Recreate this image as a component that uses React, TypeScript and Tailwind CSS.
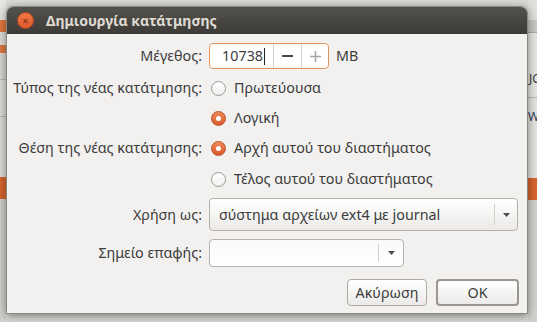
import React from 'react';

function Radio({ checked, label }: { checked: boolean; label: string }) {
  return (
    <div className="flex items-center gap-[8px] pl-[2px]">
      {checked ? (
        <span className="flex h-[15px] w-[15px] items-center justify-center rounded-full border border-[#b9532a] bg-gradient-to-b from-[#f08a5a] to-[#d9582a]">
          <span className="h-[5px] w-[5px] rounded-full bg-white" />
        </span>
      ) : (
        <span className="h-[15px] w-[15px] rounded-full border border-[#9d9a95] bg-gradient-to-b from-white to-[#f1f0ef]" />
      )}
      <span>{label}</span>
    </div>
  );
}

function Arrow() {
  return (
    <svg width="9" height="6" viewBox="0 0 9 6">
      <path d="M1 1h7L4.5 5z" fill="#4c4c4c" />
    </svg>
  );
}

export default function App() {
  return (
    <div className="relative h-[322px] w-[537px] overflow-hidden bg-[#dcdad6] font-['Noto_Sans',sans-serif] text-[14.3px] text-[#3c3c3c]">
      {/* window behind the dialog */}
      <div className="flex h-full justify-between">
        <div className="flex w-[6px] flex-col">
          <div className="h-[20px] bg-[#e6e5e2]" />
          <div className="h-[12px] bg-[#e4783f]" />
          <div className="h-[13px] bg-[#dedcd8]" />
          <div className="h-[8px] bg-[#dc7a45]" />
          <div className="h-[27px] bg-[#d8d6d2] border-b border-[#b8b6b2]" />
          <div className="h-[37px] bg-[#dfddd9] border-b border-[#b8b6b2]" />
          <div className="h-[60px] bg-[#dedcd8]" />
          <div className="h-[22px] bg-[#d9652f]" />
          <div className="flex-1 bg-[#d3d1cd]" />
        </div>
        <div className="flex w-[9px] flex-col overflow-hidden text-[12px] leading-none">
          <div className="h-[20px] bg-[#e0dfdc]" />
          <div className="h-[13px] border-b border-[#aaa8a4] bg-[#c9c7c3]" />
          <div className="flex h-[65px] items-end border-b border-[#b8b6b2] bg-[#e6e5e2] pb-[12px] pl-[1px]">JC</div>
          <div className="flex h-[80px] items-start bg-[#e4e3e0] pt-[13px] text-[#2f3a5a]">W</div>
          <div className="h-[22px] bg-[#d9652f]" />
          <div className="flex-1 bg-[#d3d1cd]" />
        </div>
      </div>

      {/* dialog */}
      <div className="absolute left-[6px] top-[6px] flex h-[308px] w-[522px] flex-col overflow-hidden rounded-t-[7px] border border-[#8a8884] bg-[#f2f1f0] shadow-[0_2px_10px_rgba(0,0,0,0.45)]">
        <div className="flex h-[27px] shrink-0 items-center bg-gradient-to-b from-[#53524d] to-[#3c3b37] pl-[10px]">
          <span className="flex h-[17px] w-[17px] items-center justify-center rounded-full border border-[#b4461f] bg-gradient-to-b from-[#f07746] to-[#df5a2a] text-[11px] leading-none text-[#7a2c10]">
            ×
          </span>
          <span className="ml-[12px] text-[14px] font-bold text-[#dfdbd2]">Δημιουργία κατάτμησης</span>
        </div>

        <div className="grid grid-cols-[195px_1fr] gap-x-[7px] pr-[9px] pt-[9px]">
          <div className="flex h-[26px] items-center justify-end">Μέγεθος:</div>
          <div className="flex items-center">
            <div className="flex h-[26px] w-[120px] overflow-hidden rounded-[4px] border border-[#e4935f] bg-white">
              <div className="flex w-[63px] items-center justify-end pr-[8px]">
                10738<span className="ml-[1px] h-[17px] w-px bg-[#222]" />
              </div>
              <div className="flex w-[28px] items-center justify-center border-l border-[#d6d3cf] text-[#444]">
                <svg width="11" height="2" viewBox="0 0 11 2"><rect width="11" height="2" fill="#4a4a4a" /></svg>
              </div>
              <div className="flex flex-1 items-center justify-center border-l border-[#d6d3cf]">
                <svg width="11" height="11" viewBox="0 0 11 11"><path d="M5.5 0v11M0 5.5h11" stroke="#a9a7a3" strokeWidth="1.6" /></svg>
              </div>
            </div>
            <span className="ml-[7px]">MB</span>
          </div>

          <div className="mt-[4px] flex h-[30px] items-center justify-end">Τύπος της νέας κατάτμησης:</div>
          <div className="mt-[4px] flex h-[30px] items-center"><Radio checked={false} label="Πρωτεύουσα" /></div>

          <div className="h-[30px]" />
          <div className="flex h-[30px] items-center"><Radio checked label="Λογική" /></div>

          <div className="flex h-[30px] items-center justify-end">Θέση της νέας κατάτμησης:</div>
          <div className="flex h-[30px] items-center"><Radio checked label="Αρχή αυτού του διαστήματος" /></div>

          <div className="h-[32px]" />
          <div className="flex h-[32px] items-center"><Radio checked={false} label="Τέλος αυτού του διαστήματος" /></div>

          <div className="mt-[3px] flex h-[33px] items-center justify-end">Χρήση ως:</div>
          <div className="mt-[3px] flex h-[33px] items-center rounded-[4px] border border-[#b5b2ad] bg-gradient-to-b from-white to-[#ebeae8]">
            <span className="flex-1 pl-[9px]">σύστημα αρχείων ext4 με journal</span>
            <span className="flex h-[21px] w-[23px] items-center justify-center border-l border-[#d3d0cc]"><Arrow /></span>
          </div>

          <div className="mt-[8px] flex h-[28px] items-center justify-end">Σημείο επαφής:</div>
          <div className="mt-[8px] flex h-[28px] w-[195px] items-center rounded-[4px] border border-[#b5b2ad] bg-gradient-to-b from-[#fafafa] to-white">
            <span className="flex-1" />
            <span className="flex h-[18px] w-[25px] items-center justify-center border-l border-[#d3d0cc]"><Arrow /></span>
          </div>
        </div>

        <div className="mt-[12px] flex justify-end gap-[9px] pr-[8px]">
          <button className="h-[27px] w-[80px] rounded-[4px] border border-[#aeaba6] bg-gradient-to-b from-white to-[#ebeae8]">Ακύρωση</button>
          <button className="h-[27px] w-[83px] rounded-[4px] border-2 border-[#9a9792] bg-gradient-to-b from-white to-[#ebeae8]">OK</button>
        </div>
      </div>
    </div>
  );
}
